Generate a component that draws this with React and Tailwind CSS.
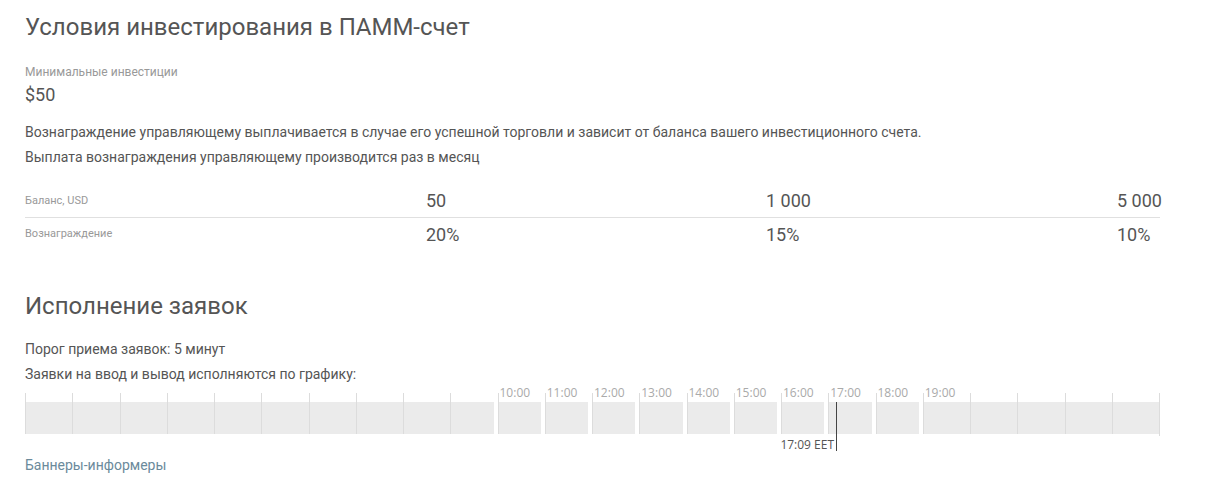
import React from 'react'

const HOURS = Array.from({ length: 24 }, (_, i) => i)
const LABELLED = [10, 11, 12, 13, 14, 15, 16, 17, 18, 19]
const OPEN = [9, 10, 11, 12, 13, 14, 15, 16, 17, 18]

const fees = [
  { balance: '50', fee: '20%' },
  { balance: '1 000', fee: '15%' },
  { balance: '5 000', fee: '10%' },
]

function Schedule({ now = 17 + 9 / 60 }) {
  return (
    <div className="relative h-[64px] w-[1135px]">
      <div className="flex">
        {HOURS.map(h => (
          <div key={h} className="flex-1 flex flex-col">
            <div className="relative h-[15px]">
              <div className="absolute left-0 bottom-0 w-px h-[9px] bg-[#dcdcdc]" />
              {LABELLED.includes(h) && (
                <span className="absolute left-[2px] top-0 text-[12px] leading-[12px] text-[#aaa] font-['Open_Sans',sans-serif]">
                  {String(h).padStart(2, '0')}:00
                </span>
              )}
            </div>
            <div
              className={`h-[32px] bg-[#ebebeb] border-l border-[#dcdcdc] ${
                OPEN.includes(h) ? 'border-r-4 border-r-white' : ''
              }`}
            />
          </div>
        ))}
        <div className="w-px flex flex-col">
          <div className="h-[6px]" />
          <div className="h-[43px] bg-[#dcdcdc]" />
        </div>
      </div>

      {/* current time marker */}
      <div
        className="absolute top-[15px] h-[49px] w-px bg-[#444]"
        style={{ left: `${(now / 24) * 100}%` }}
      >
        <span className="absolute right-[3px] top-[36px] whitespace-nowrap text-[12px] leading-[14px] text-[#555] font-['Open_Sans',sans-serif]">
          17:09 EET
        </span>
      </div>
    </div>
  )
}

export default function App() {
  return (
    <div className="min-h-screen bg-white px-[25px] pt-[11px] font-['Roboto',sans-serif] text-[#555]">

      {/* ── Investment terms ── */}
      <h2 className="text-[24px] leading-[32px] font-normal text-[#555]">
        Условия инвестирования в ПАММ-счет
      </h2>

      <p className="mt-[21px] text-[12px] leading-[16px] text-[#999]">Минимальные инвестиции</p>
      <p className="mt-[3px] text-[18px] leading-[24px]">$50</p>

      <div className="mt-[13px] text-[14px] leading-[25px]">
        <p>Вознаграждение управляющему выплачивается в случае его успешной торговли и зависит от баланса вашего инвестиционного счета.</p>
        <p>Выплата вознаграждения управляющему производится раз в месяц</p>
      </div>

      <div className="mt-[15px] w-[1135px] whitespace-nowrap">
        <div className="grid grid-cols-[401px_340px_351px_43px] h-[33px] items-center border-b border-[#e0e0e0]">
          <span className="text-[11px] text-[#999]">Баланс, USD</span>
          {fees.map(f => (
            <span key={f.balance} className="text-[18px] leading-[24px]">{f.balance}</span>
          ))}
        </div>
        <div className="grid grid-cols-[401px_340px_351px_43px] h-[33px] items-center">
          <span className="text-[11px] text-[#999]">Вознаграждение</span>
          {fees.map(f => (
            <span key={f.fee} className="text-[18px] leading-[24px]">{f.fee}</span>
          ))}
        </div>
      </div>

      {/* ── Order execution ── */}
      <h2 className="mt-[39px] text-[24px] leading-[32px] font-normal text-[#555]">
        Исполнение заявок
      </h2>

      <div className="mt-[15px] text-[14px] leading-[25px]">
        <p>Порог приема заявок: 5 минут</p>
        <p>Заявки на ввод и вывод исполняются по графику:</p>
      </div>

      <Schedule />

      <a href="#" className="block mt-[2px] text-[14px] leading-[25px] text-[#6b8a9b]">
        Баннеры-информеры
      </a>
    </div>
  )
}
